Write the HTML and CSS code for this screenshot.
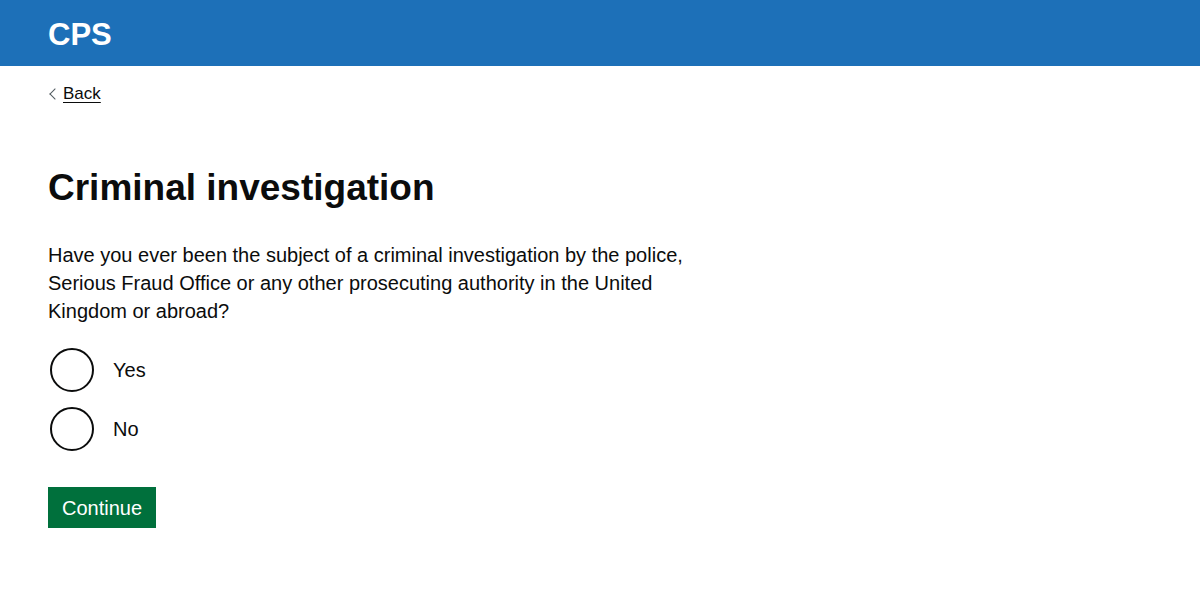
FILE: index.html
```html
<!DOCTYPE html>
<html lang="en">
<head>
<meta charset="utf-8">
<title>Criminal investigation - CPS</title>
<link rel="stylesheet" href="styles.css">
</head>
<body>
<header class="header">
  <a class="header-logo" href="#">CPS</a>
</header>
<div class="container">
  <a class="back-link" href="#">Back</a>
  <main class="main">
    <h1 class="heading">Criminal investigation</h1>
    <form class="form">
      <fieldset class="fieldset">
        <legend class="legend">Have you ever been the subject of a criminal investigation by the police, Serious Fraud Office or any other prosecuting authority in the United Kingdom or abroad?</legend>
        <div class="radios">
          <label class="radio">
            <input class="radio-input" type="radio" name="ci" value="yes">
            <span class="radio-label">Yes</span>
          </label>
          <label class="radio">
            <input class="radio-input" type="radio" name="ci" value="no">
            <span class="radio-label">No</span>
          </label>
        </div>
      </fieldset>
      <button class="button" type="button">Continue</button>
    </form>
  </main>
</div>
</body>
</html>
```

FILE: styles.css
```css
* { box-sizing: border-box; }
html, body { margin: 0; padding: 0; background: #fff; }
body {
  font-family: "Liberation Sans", Arial, sans-serif;
  color: #0b0c0c;
}
.header {
  background: #1d70b8;
  height: 66px;
  display: flex;
  align-items: center;
  padding: 0 48px;
}
.header-logo {
  color: #fff;
  font-weight: 700;
  font-size: 31px;
  text-decoration: none;
  line-height: 1;
  padding-top: 2px;
}
.container {
  padding: 0 48px;
}
.back-link {
  display: inline-flex;
  align-items: center;
  margin-top: 18px;
  font-size: 17px;
  line-height: 20px;
  color: #0b0c0c;
  text-decoration: underline;
  text-underline-offset: 3px;
  padding-left: 15px;
  position: relative;
}
.back-link::before {
  content: "";
  position: absolute;
  left: 3px;
  top: 6px;
  width: 7px;
  height: 7px;
  border-left: 1px solid #505a5f;
  border-bottom: 1px solid #505a5f;
  transform: rotate(45deg);
}
.main {
  padding-top: 64px;
  max-width: 640px;
}
.heading {
  margin: 0 0 33px;
  font-size: 37px;
  line-height: 40px;
  font-weight: 700;
}
.form { margin: 0; }
.fieldset {
  margin: 0;
  padding: 0;
  border: 0;
  min-width: 0;
}
.legend {
  padding: 0;
  font-size: 20px;
  line-height: 28px;
  margin-bottom: 23px;
}
.radios {
  display: flex;
  flex-direction: column;
  gap: 15px;
}
.radio {
  display: flex;
  align-items: center;
  gap: 19px;
  cursor: pointer;
}
.radio-input {
  appearance: none;
  margin: 0 0 0 2px;
  width: 44px;
  height: 44px;
  border: 2px solid #0b0c0c;
  border-radius: 50%;
  background: #fff;
  flex: none;
}
.radio-label {
  font-size: 20px;
  line-height: 25px;
}
.button {
  margin-top: 36px;
  font-family: inherit;
  font-size: 20px;
  line-height: 20px;
  color: #fff;
  background: #00703c;
  border: 0;
  border-radius: 0;
  padding: 11px 14px 10px;
  box-shadow: 0 3px 0 #002d18;
  cursor: pointer;
}
```
